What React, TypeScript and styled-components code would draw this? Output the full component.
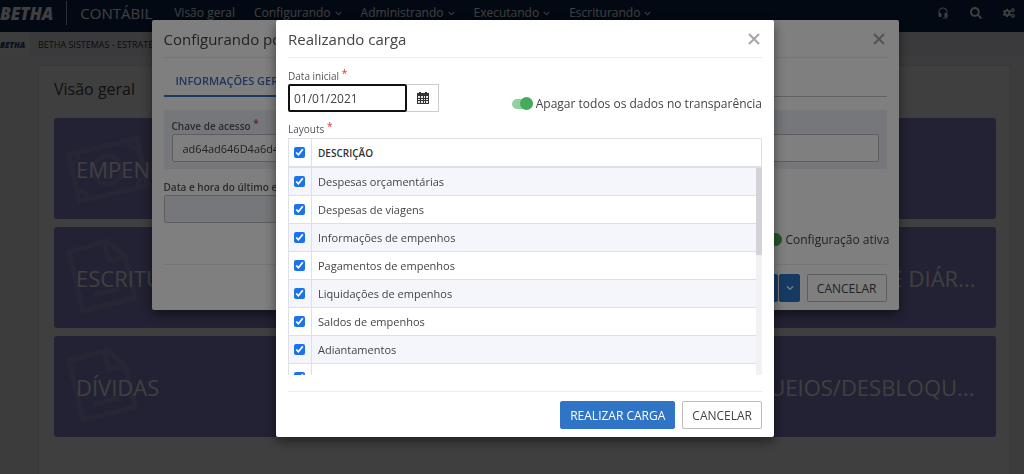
import React from "react";
import styled, { createGlobalStyle } from "styled-components";
import { FaChevronDown, FaSearch, FaCogs } from "react-icons/fa";
import { MdHeadsetMic } from "react-icons/md";

const GlobalStyle = createGlobalStyle`
  * { box-sizing: border-box; }
  body {
    margin: 0;
    background: #f0f0f0;
    color: #444;
    font-family: "Open Sans", "Noto Sans", sans-serif;
    font-size: 12px;
    overflow: hidden;
  }
  button, input { font-family: inherit; }
`;

const Page = styled.div`
  min-height: 100vh;
  display: flex;
  flex-direction: column;
`;

const TopBar = styled.header`
  display: flex;
  align-items: center;
  height: 32px;
  padding: 0 9px 6px 0;
  background: #08264c;
  color: #fff;
`;

const Logo = styled.span<{ $small?: boolean }>`
  font-weight: 800;
  font-style: italic;
  font-size: ${(p) => (p.$small ? 8 : 17)}px;
  line-height: 1;
`;

const Product = styled.span`
  margin-left: 13px;
  padding-left: 13px;
  border-left: 1px solid #b8c4d4;
  font-size: 15px;
  line-height: 24px;
`;

const Menu = styled.nav`
  display: flex;
  gap: 19px;
  margin-left: 22px;
  flex: 1;
`;

const MenuLink = styled.a`
  display: flex;
  align-items: center;
  gap: 4px;
  color: #fff;
  font-size: 12px;
  line-height: 24px;
  text-decoration: none;
  white-space: nowrap;
  svg { width: 7px; height: 7px; }
`;

const Tools = styled.div`
  display: flex;
  gap: 21px;
`;

const ToolButton = styled.button`
  display: flex;
  padding: 0;
  border: 0;
  background: none;
  color: #fff;
  svg { width: 12px; height: 12px; }
`;

const EntityBar = styled.div`
  display: flex;
  align-items: center;
  height: 25px;
  background: #e8ebf4;
  color: #333;
  font-size: 9px;
`;

const EntityLogo = styled.div`
  display: flex;
  align-items: center;
  width: 30px;
  height: 25px;
  margin-right: 8px;
  background: #f6f6f6;
  color: #2b3d70;
`;

const Panel = styled.main`
  flex: 1;
  margin: 8px 13px 0 38px;
  padding: 11px 14px 36px 15px;
  border: 1px solid #e6e6e6;
  border-bottom: 0;
  background: #fff;
`;

const PanelTitle = styled.h1`
  margin: 0 0 17px;
  font-size: 16px;
  font-weight: 400;
  line-height: 24px;
`;

const Tiles = styled.div`
  display: grid;
  grid-template-columns: repeat(3, 1fr);
  gap: 8px;
`;

const Tile = styled.a`
  position: relative;
  display: flex;
  align-items: center;
  height: 101px;
  padding: 0 20px 0 22px;
  border-radius: 3px;
  background: #8888d0;
  color: #fff;
  font-size: 22px;
  text-decoration: none;
  white-space: nowrap;
  svg {
    position: absolute;
    left: 12px;
    top: 8px;
    color: #9898d4;
  }
  span { position: relative; }
`;

const Overlay = styled.div`
  position: fixed;
  inset: 0;
  display: flex;
  justify-content: center;
  align-items: flex-start;
  padding: 20px 0 0 26px;
  background: rgba(0, 0, 0, 0.5);
`;

const Dialog = styled.section<{ $width: number }>`
  width: ${(p) => p.$width}px;
  max-width: 100%;
  padding: 0 12px 8px;
  border-radius: 2px;
  background: #fff;
  box-shadow: 0 4px 12px rgba(0, 0, 0, 0.5);
`;

const DialogHeader = styled.header`
  display: flex;
  justify-content: space-between;
  align-items: center;
  height: 38px;
  border-bottom: 1px solid #ececec;
`;

const DialogTitle = styled.h2`
  margin: 0;
  font-size: 15px;
  font-weight: 400;
  line-height: 24px;
  color: #444;
`;

const CloseButton = styled.button`
  display: flex;
  padding: 2px;
  border: 0;
  background: none;
  color: #a6a6a6;
`;

const Tabs = styled.div`
  display: flex;
  height: 39px;
  padding-top: 8px;
  border-bottom: 1px solid #c4c4c4;
`;

const Tab = styled.button`
  height: 31px;
  padding: 0 12px;
  border: 0;
  border-bottom: 2px solid #2f74c5;
  background: none;
  color: #3f6cb8;
  font-size: 11px;
  font-weight: 600;
`;

const KeyGroup = styled.div`
  margin-top: 13px;
  padding: 8px 8px 7px;
  background: #eceff4;
`;

const Label = styled.label`
  display: block;
  color: #555;
  font-size: 10px;
  font-weight: 600;
  line-height: 16px;
`;

const Caption = styled(Label)`
  font-weight: 500;
`;

const Required = styled.span`
  position: relative;
  top: -3px;
  color: #d33;
`;

const Field = styled.input`
  display: block;
  width: 100%;
  height: 28px;
  padding: 0 10px;
  border: 1px solid #bbb;
  border-radius: 2px;
  background: #fff;
  color: #444;
  font-size: 11px;
  outline: none;
  &:disabled { background: #eceff4; }
`;

const LastRun = styled.div`
  width: 50%;
  margin-top: 10px;
`;

const ActiveRow = styled.div`
  display: flex;
  justify-content: flex-end;
  margin: 9px -3px 0 0;
  padding-bottom: 16px;
`;

const SwitchLabel = styled.label`
  display: flex;
  align-items: center;
  gap: 3px;
  font-size: 12px;
  line-height: 16px;
`;

const Switch = styled.input`
  appearance: none;
  position: relative;
  width: 21px;
  height: 10px;
  margin: 0;
  border-radius: 5px;
  background: #93cf9f;
  &::after {
    content: "";
    position: absolute;
    right: 0;
    top: -2px;
    width: 13px;
    height: 13px;
    border-radius: 50%;
    background: #45ab5a;
  }
`;

const Footer = styled.footer`
  display: flex;
  justify-content: flex-end;
  gap: 7px;
  padding-top: 9px;
  border-top: 1px solid #ececec;
`;

const Button = styled.button<{ $primary?: boolean }>`
  height: 28px;
  padding: 0 9px;
  border: 1px solid ${(p) => (p.$primary ? "#2f74c5" : "#bbb")};
  border-radius: 2px;
  background: ${(p) => (p.$primary ? "#2f74c5" : "#fff")};
  color: ${(p) => (p.$primary ? "#fff" : "#444")};
  font-size: 12px;
  white-space: nowrap;
`;

const Split = styled.div`
  display: flex;
  gap: 1px;
`;

const SplitMain = styled(Button)`
  width: 64px;
`;

const SplitArrow = styled(Button)`
  width: 21px;
  padding: 0 6px;
  svg { display: block; width: 8px; height: 8px; }
`;

const DateRow = styled.div`
  display: flex;
  justify-content: space-between;
  align-items: flex-end;
  margin: 10px 0 9px;
`;

const DateGroup = styled.div`
  display: flex;
`;

const DateInput = styled(Field)`
  width: 119px;
  padding: 0 4px;
  border: 2px solid #111;
  font-size: 12px;
`;

const CalendarButton = styled.button`
  display: flex;
  align-items: center;
  justify-content: center;
  width: 32px;
  height: 28px;
  padding: 0;
  border: 1px solid #ccc;
  border-left: 0;
  background: #fff;
  color: #333;
`;

const TableFrame = styled.div`
  position: relative;
  margin: 1px 0 16px;
`;

const TableScroll = styled.div`
  height: 237px;
  overflow-y: auto;
  scrollbar-width: none;
  &::-webkit-scrollbar { display: none; }
`;

const ScrollTrack = styled.div`
  position: absolute;
  top: 29px;
  right: 0;
  bottom: 0;
  width: 6px;
  background: #f1f1f4;
`;

const ScrollThumb = styled.div`
  height: 88px;
  background: #d2d2d8;
`;

const LayoutTable = styled.table`
  width: 100%;
  border-collapse: separate;
  border-spacing: 0;
  border-left: 1px solid #dde0e6;
  font-size: 11px;
  th, td {
    height: 28px;
    padding: 0 6px;
    border-bottom: 1px solid #dde0e6;
    text-align: left;
    font-weight: 400;
  }
  th {
    position: sticky;
    top: 0;
    height: 30px;
    border-top: 1px solid #dde0e6;
    border-bottom: 2px solid #dde0e6;
    background: #fff;
    color: #333;
    font-size: 10px;
    font-weight: 600;
    z-index: 1;
  }
  th:last-child { border-right: 1px solid #dde0e6; }
  th:first-child, td:first-child {
    width: 23px;
    padding: 0 5px;
    border-right: 1px solid #dde0e6;
  }
  tbody tr:nth-child(odd) { background: #f4f6fb; }
`;

const Check = styled.input`
  display: block;
  width: 11px;
  height: 11px;
  margin: 0;
  accent-color: #1a73e8;
`;

const BillIcon = () => (
  <svg width="86" height="86" viewBox="0 0 86 86" fill="none" stroke="currentColor" strokeWidth="5" aria-hidden="true">
    <g transform="rotate(-13 42 44)">
      <rect x="7" y="20" width="70" height="48" />
      <circle cx="42" cy="44" r="14" />
      <path d="M42 37v14M37 51h10M38 40l4-3M7 30a10 10 0 0 0 10-10M67 20a10 10 0 0 0 10 10M7 58a10 10 0 0 1 10 10M67 68a10 10 0 0 1 10-10" strokeWidth="4" />
    </g>
  </svg>
);

const FileIcon = () => (
  <svg width="86" height="86" viewBox="0 0 86 86" fill="none" stroke="currentColor" strokeWidth="5" strokeLinejoin="round" aria-hidden="true">
    <path d="M3 17 41 6l18 15 10 42-52 13z" />
    <path d="M38 7l5 19 17-4M28 60l25-6" />
  </svg>
);

const CloseIcon = () => (
  <svg width="12" height="12" viewBox="0 0 12 12" stroke="currentColor" strokeWidth="2" aria-hidden="true">
    <path d="M1 1l10 10M11 1L1 11" />
  </svg>
);

const CalendarIcon = () => (
  <svg width="12" height="12" viewBox="0 0 12 12" aria-hidden="true">
    <path d="M2 0h2v1h4V0h2v1h2v11H0V1h2z" fill="currentColor" />
    <path d="M1 4h2v2H1zM4 4h2v2H4zM7 4h1v2H7zM9 4h2v2H9zM1 7h2v1H1zM4 7h2v1H4zM7 7h1v1H7zM9 7h2v1H9zM1 9h2v2H1zM4 9h2v2H4zM7 9h1v2H7zM9 9h2v2H9z" fill="#dfe9e2" />
  </svg>
);

const menu = ["Visão geral", "Configurando", "Administrando", "Executando", "Escriturando"];

const tiles = [
  { label: "EMPENHOS", bill: true },
  { label: "", bill: true },
  { label: "", bill: true },
  { label: "ESCRITURAÇÃO" },
  { label: "" },
  { label: "LANÇAMENTOS DE DIÁR..." },
  { label: "DÍVIDAS" },
  { label: "" },
  { label: "BLOQUEIOS/DESBLOQU..." },
];

const layouts = [
  "Despesas orçamentárias",
  "Despesas de viagens",
  "Informações de empenhos",
  "Pagamentos de empenhos",
  "Liquidações de empenhos",
  "Saldos de empenhos",
  "Adiantamentos",
  "",
];

const DialogHead = ({ title }: { title: string }) => (
  <DialogHeader>
    <DialogTitle>{title}</DialogTitle>
    <CloseButton aria-label="Fechar"><CloseIcon /></CloseButton>
  </DialogHeader>
);

export default function App() {
  return (
    <>
      <GlobalStyle />
      <Page>
        <TopBar>
          <Logo>BETHA</Logo>
          <Product>CONTÁBIL</Product>
          <Menu>
            {menu.map((item, i) => (
              <MenuLink href="#" key={item}>
                {item}
                {i > 0 && <FaChevronDown />}
              </MenuLink>
            ))}
          </Menu>
          <Tools>
            <ToolButton aria-label="Suporte"><MdHeadsetMic /></ToolButton>
            <ToolButton aria-label="Pesquisar"><FaSearch /></ToolButton>
            <ToolButton aria-label="Configurações"><FaCogs /></ToolButton>
          </Tools>
        </TopBar>
        <EntityBar>
          <EntityLogo><Logo $small>BETHA</Logo></EntityLogo>
          BETHA SISTEMAS - ESTRATÉGIA
        </EntityBar>
        <Panel>
          <PanelTitle>Visão geral</PanelTitle>
          <Tiles>
            {tiles.map((tile, i) => (
              <Tile href="#" key={i}>
                {tile.bill ? <BillIcon /> : <FileIcon />}
                <span>{tile.label}</span>
              </Tile>
            ))}
          </Tiles>
        </Panel>
      </Page>

      <Overlay>
        <Dialog $width={747}>
          <DialogHead title="Configurando portal" />
          <Tabs><Tab>INFORMAÇÕES GERAIS</Tab></Tabs>
          <KeyGroup>
            <Label htmlFor="key">Chave de acesso <Required>*</Required></Label>
            <Field id="key" defaultValue="ad64ad646D4a6d4" />
          </KeyGroup>
          <LastRun>
            <Label htmlFor="last">Data e hora do último envio</Label>
            <Field id="last" disabled />
          </LastRun>
          <ActiveRow>
            <SwitchLabel><Switch type="checkbox" defaultChecked />Configuração ativa</SwitchLabel>
          </ActiveRow>
          <Footer>
            <Split>
              <SplitMain $primary aria-label="Salvar" />
              <SplitArrow $primary aria-label="Mais opções"><FaChevronDown /></SplitArrow>
            </Split>
            <Button>CANCELAR</Button>
          </Footer>
        </Dialog>
      </Overlay>

      <Overlay>
        <Dialog $width={498}>
          <DialogHead title="Realizando carga" />
          <DateRow>
            <div>
              <Caption htmlFor="start">Data inicial <Required>*</Required></Caption>
              <DateGroup>
                <DateInput id="start" defaultValue="01/01/2021" />
                <CalendarButton aria-label="Abrir calendário"><CalendarIcon /></CalendarButton>
              </DateGroup>
            </div>
            <SwitchLabel><Switch type="checkbox" defaultChecked />Apagar todos os dados no transparência</SwitchLabel>
          </DateRow>
          <Caption as="div">Layouts <Required>*</Required></Caption>
          <TableFrame>
            <TableScroll>
              <LayoutTable>
                <thead>
                  <tr>
                    <th><Check type="checkbox" defaultChecked aria-label="Selecionar todos" /></th>
                    <th>DESCRIÇÃO</th>
                  </tr>
                </thead>
                <tbody>
                  {layouts.map((name, i) => (
                    <tr key={i}>
                      <td><Check type="checkbox" defaultChecked aria-label={name || "Layout"} /></td>
                      <td>{name}</td>
                    </tr>
                  ))}
                </tbody>
              </LayoutTable>
            </TableScroll>
            <ScrollTrack><ScrollThumb /></ScrollTrack>
          </TableFrame>
          <Footer>
            <Button $primary>REALIZAR CARGA</Button>
            <Button>CANCELAR</Button>
          </Footer>
        </Dialog>
      </Overlay>
    </>
  );
}
